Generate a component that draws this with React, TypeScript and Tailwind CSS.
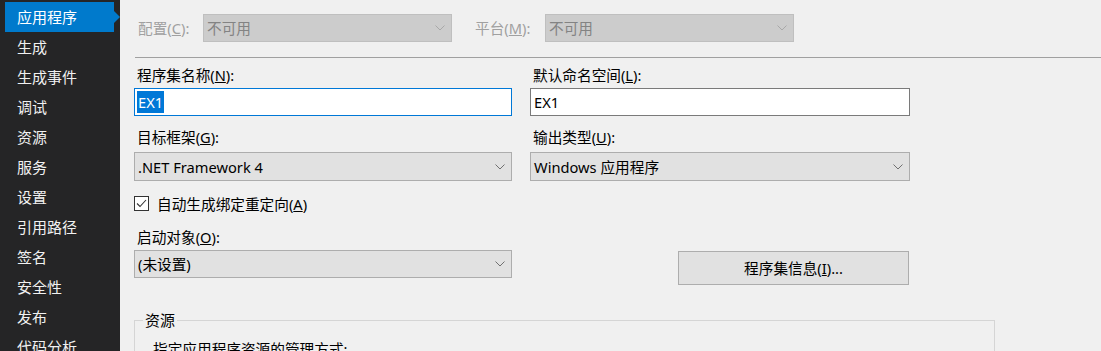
import type { ReactNode } from "react";

const FONT = {
  fontFamily: '"Noto Sans", "Noto Sans CJK SC", sans-serif',
};

const NAV = [
  "应用程序",
  "生成",
  "生成事件",
  "调试",
  "资源",
  "服务",
  "设置",
  "引用路径",
  "签名",
  "安全性",
  "发布",
  "代码分析",
];

function Chevron({ color = "#606060" }: { color?: string }) {
  return (
    <svg width="10" height="6" viewBox="0 0 10 6" className="shrink-0">
      <path d="M0.5 0.5 L5 5 L9.5 0.5" fill="none" stroke={color} strokeWidth="1" />
    </svg>
  );
}

function Combo({
  value,
  disabled,
  className,
}: {
  value: string;
  disabled?: boolean;
  className?: string;
}) {
  return (
    <div
      className={
        "flex items-center justify-between border pl-[3px] pr-[6px] " +
        (disabled
          ? "border-[#bfbfbf] bg-[#cccccc] text-[#838383] "
          : "border-[#adadad] bg-[#e1e1e1] text-black ") +
        (className ?? "")
      }
    >
      <span className="whitespace-nowrap">{value}</span>
      <Chevron color={disabled ? "#a8a8a8" : "#707070"} />
    </div>
  );
}

function Label({ children }: { children: ReactNode }) {
  return <div className="h-[20px] pl-[3px] leading-[20px] text-black">{children}</div>;
}

export default function App() {
  return (
    <div className="flex h-[351px] w-[1101px] overflow-hidden bg-[#f0f0f0]" style={FONT}>
      {/* side nav */}
      <nav className="w-[120px] shrink-0 bg-[#252526] pt-[2px] text-[15px] text-[#f1f1f1]">
        {NAV.map((item, i) => (
          <div
            key={item}
            className={
              "relative ml-[5px] h-[30px] w-[109px] pl-[12px] leading-[30px] " +
              (i === 0 ? "bg-[#007acc] text-white" : "")
            }
          >
            {item}
            {i === 0 && (
              <span className="absolute right-[-6px] top-[9px] h-0 w-0 border-y-[6px] border-l-[6px] border-y-transparent border-l-[#007acc]" />
            )}
          </div>
        ))}
      </nav>

      {/* page */}
      <main className="flex-1 pl-[14px] text-[14.67px]">
        <div className="mt-[14px] flex h-[28px] items-center">
          <div className="w-[69px] pl-[4px] text-[#a0a0a0]">
            配置(<u>C</u>):
          </div>
          <Combo value="不可用" disabled className="h-[28px] w-[249px]" />
          <div className="ml-[23px] w-[70px] text-[#a0a0a0]">
            平台(<u>M</u>):
          </div>
          <Combo value="不可用" disabled className="h-[28px] w-[249px]" />
        </div>

        <div className="ml-[1px] mt-[15px] h-px bg-[#a0a0a0]" />

        {/* names */}
        <div className="mt-[7px] flex gap-[18px]">
          <div className="w-[378px]">
            <Label>
              程序集名称(<u>N</u>):
            </Label>
            <div className="mt-[3px] flex h-[28px] items-center border border-[#0078d7] bg-white pl-[2px]">
              <span className="bg-[#0078d7] px-px leading-[22px] text-white">EX1</span>
            </div>
          </div>
          <div className="w-[380px]">
            <Label>
              默认命名空间(<u>L</u>):
            </Label>
            <div className="mt-[3px] flex h-[28px] items-center border border-[#7a7a7a] bg-white pl-[3px] text-black">
              EX1
            </div>
          </div>
        </div>

        {/* framework / output */}
        <div className="mt-[11px] flex gap-[18px]">
          <div className="w-[378px]">
            <Label>
              目标框架(<u>G</u>):
            </Label>
            <Combo value=".NET Framework 4" className="mt-[5px] h-[29px]" />
          </div>
          <div className="w-[380px]">
            <Label>
              输出类型(<u>U</u>):
            </Label>
            <Combo value="Windows 应用程序" className="mt-[5px] h-[29px]" />
          </div>
        </div>

        {/* checkbox */}
        <div className="mt-[15px] flex h-[15px] items-center">
          <div className="flex h-[15px] w-[15px] items-center justify-center border border-[#333333] bg-white">
            <svg width="11" height="9" viewBox="0 0 11 9">
              <path d="M1 4.5 L4 7.5 L10 1" fill="none" stroke="#333333" strokeWidth="1.1" />
            </svg>
          </div>
          <span className="ml-[8px] text-black">
            自动生成绑定重定向(<u>A</u>)
          </span>
        </div>

        {/* startup object / assembly info */}
        <div className="mt-[16px] flex items-start gap-[18px]">
          <div className="w-[378px]">
            <Label>
              启动对象(<u>O</u>):
            </Label>
            <Combo value="(未设置)" className="mt-[3px] h-[28px]" />
          </div>
          <div className="w-[380px] pl-[148px] pt-[24px]">
            <button className="flex h-[34px] w-[231px] items-center justify-center border border-[#adadad] bg-[#e1e1e1] text-black">
              程序集信息(<u>I</u>)...
            </button>
          </div>
        </div>

        {/* resources group */}
        <fieldset className="mt-[25px] h-[80px] w-[861px] border border-[#d5d5d5] pl-[8px]">
          <legend className="px-[2px] text-[15px] leading-[20px] text-black">资源</legend>
          <div className="mt-[8px] pl-[10px] text-black">指定应用程序资源的管理方式:</div>
        </fieldset>
      </main>
    </div>
  );
}
